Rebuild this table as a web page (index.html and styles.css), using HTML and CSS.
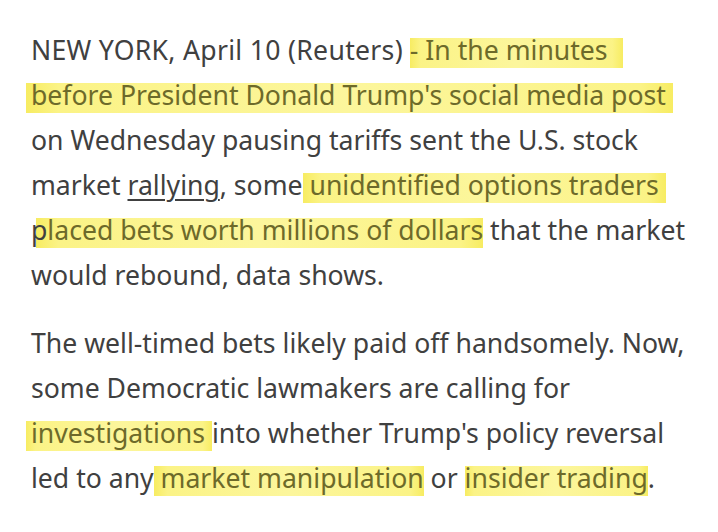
FILE: index.html
```html
<!DOCTYPE html>
<html lang="en">
<head>
<meta charset="utf-8">
<title>Reuters</title>
<link rel="stylesheet" href="styles.css">
</head>
<body>
<article class="article">
<p class="para"><span class="dateline">NEW YORK, April 10 (Reuters)</span> <span class="hl hl-a">- In the minutes&nbsp;</span><br><span class="hl hl-b">before President Donald Trump's social media post&nbsp;</span><br>on Wednesday pausing tariffs sent the U.S. stock<br>market <a class="link" href="#">rallying</a>, some<span class="hl"> unidentified options traders&nbsp;</span><br><span class="hl hl-p"><span class="plain">p</span>laced bets worth millions of dollars</span> that the market<br>would rebound, data shows.</p>
<p class="para">The well-timed bets likely paid off handsomely. Now,<br>some Democratic lawmakers are calling for<br><span class="hl hl-b">investigations&nbsp;</span>into whether Trump's policy reversal<br>led to any<span class="hl"> market manipulation</span> or <span class="hl">insider trading</span>.</p>
</article>
</body>
</html>
```
FILE: styles.css
```css
html, body {
  margin: 0;
  padding: 0;
  background: #ffffff;
}
.article {
  padding: 28px 0 0 31px;
  font-family: "Noto Sans", "Open Sans", sans-serif;
  font-size: 26.6px;
  line-height: 45px;
  color: #404040;
}
.para {
  margin: 0 0 23px 0;
  white-space: nowrap;
}
.dateline {
  letter-spacing: 0.3px;
}
.hl {
  color: #6d6a2a;
  background-image: linear-gradient(90deg, #f7ec62 0%, #fbf386 5%, #fcf69c 50%, #fbf386 95%, #f7ec62 100%);
  background-size: 100% 34px;
  background-position: 0 6px;
  background-repeat: no-repeat;
}
.hl-a {
  padding-right: 8px;
}
.hl-b {
  margin-left: -5px;
  padding-left: 5px;
}
.hl-p {
  background-size: calc(100% - 5px) 34px;
  background-position: 5px 6px;
}
.plain {
  color: #404040;
}
.link {
  color: inherit;
  text-decoration: underline;
  text-decoration-thickness: 2px;
  text-underline-offset: 4px;
}
```
